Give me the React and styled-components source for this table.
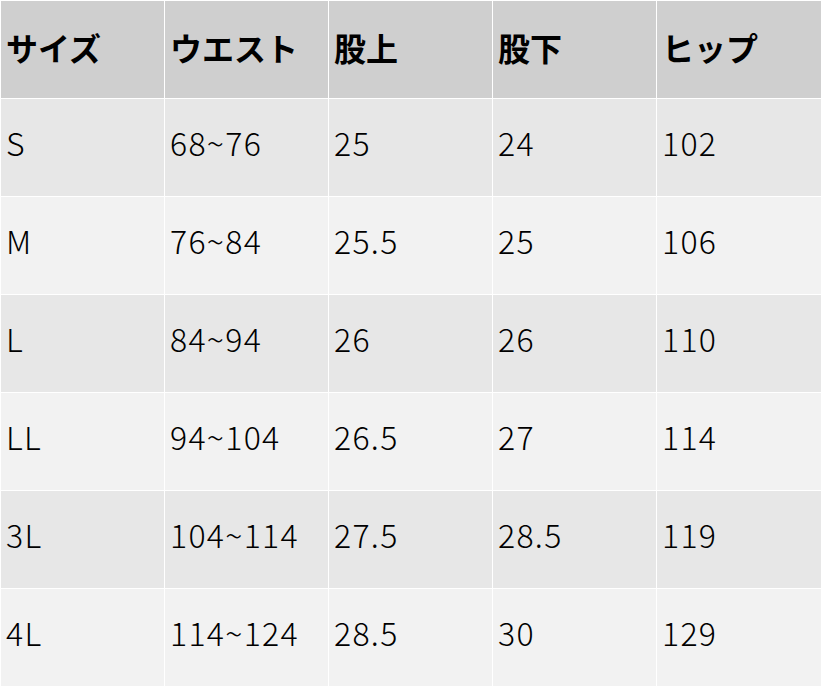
import React from "react";
import styled, { createGlobalStyle } from "styled-components";

const Global = createGlobalStyle`
  html, body { margin: 0; padding: 0; background: #ffffff; }
  body { font-family: "Noto Sans CJK JP", "Noto Sans", sans-serif; }
`;

const Grid = styled.div`
  display: grid;
  grid-template-columns: 163px 163px 163px 163px 164px;
  grid-auto-rows: 97px;
  gap: 1px;
  padding: 1px;
  width: 822px;
  box-sizing: border-box;
  background: #ffffff;
`;

const Cell = styled.div`
  display: flex;
  align-items: center;
  padding: ${(p) => (p.$head ? "0 4px 6px 5px" : "0 4px 11px 5px")};
  font-size: 32px;
  letter-spacing: ${(p) => (p.$head ? "0" : "1.3px")};
  color: #000;
  font-weight: ${(p) => (p.$head ? 700 : 300)};
  background: ${(p) => (p.$head ? "#cfcfcf" : p.$odd ? "#e7e7e7" : "#f2f2f2")};
  white-space: nowrap;
`;

const headers = ["サイズ", "ウエスト", "股上", "股下", "ヒップ"];
const rows = [
  ["S", "68~76", "25", "24", "102"],
  ["M", "76~84", "25.5", "25", "106"],
  ["L", "84~94", "26", "26", "110"],
  ["LL", "94~104", "26.5", "27", "114"],
  ["3L", "104~114", "27.5", "28.5", "119"],
  ["4L", "114~124", "28.5", "30", "129"],
];

export default function App() {
  return (
    <>
      <Global />
      <Grid>
        {headers.map((h) => (
          <Cell key={h} $head>
            {h}
          </Cell>
        ))}
        {rows.map((r, i) =>
          r.map((v, j) => (
            <Cell key={`${i}-${j}`} $odd={i % 2 === 0}>
              {v}
            </Cell>
          ))
        )}
      </Grid>
    </>
  );
}
